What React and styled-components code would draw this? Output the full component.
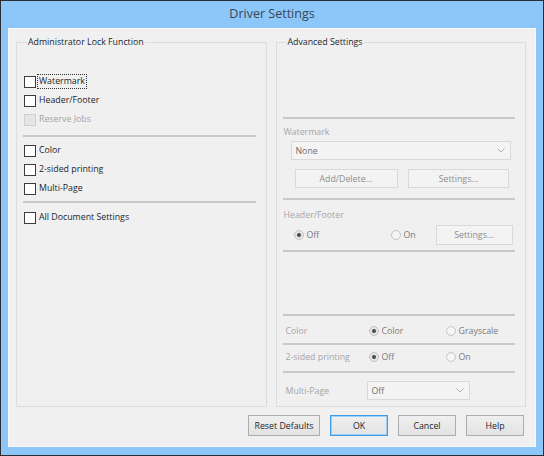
import React from "react";
import styled, { createGlobalStyle } from "styled-components";

const GlobalStyle = createGlobalStyle`
  html, body {
    margin: 0;
    padding: 0;
    background: #1e1e1e;
  }
  * {
    box-sizing: border-box;
  }
`;

const Window = styled.div`
  width: 544px;
  height: 456px;
  border: 1px solid #2c2c2c;
  background: #8dc6f8;
  padding: 0 7px 8px 7px;
  display: flex;
  flex-direction: column;
  font-family: "Open Sans", "Liberation Sans", sans-serif;
  font-size: 8.8px;
  color: #1a1f2e;
`;

const TitleBar = styled.div`
  height: 27px;
  display: flex;
  align-items: center;
  justify-content: center;
  font-size: 12.5px;
  color: #3a4655;
  padding-bottom: 2px;
`;

const Client = styled.div`
  flex: 1;
  background: #f0f0f0;
  border: 1px solid #f8f8f8;
  padding: 6px 9px 10px 7px;
  display: flex;
  flex-direction: column;
`;

const Columns = styled.div`
  flex: 1;
  display: flex;
  gap: 9px;
`;

const Group = styled.fieldset`
  margin: 0;
  flex: 1;
  min-width: 0;
  border: 1px solid #dcdcdc;
  padding: 0 10px 0 6px;
  display: flex;
  flex-direction: column;
`;

const Legend = styled.legend`
  padding: 0 1px;
  margin-left: 4px;
  line-height: 14px;
  color: #1a1f2e;
`;

const Separator = styled.div`
  height: 2px;
  background: #c9c9c9;
  margin-top: ${(p) => p.$top || 0}px;
`;

const CheckRow = styled.div`
  height: 19px;
  display: flex;
  align-items: center;
  margin-top: ${(p) => p.$top || 0}px;
  padding-left: 1px;
  color: ${(p) => (p.$disabled ? "#a4a4a4" : "#1a1f2e")};
`;

const Box = styled.span`
  width: 12px;
  height: 12px;
  border: 1px solid ${(p) => (p.$disabled ? "#cfcfcf" : "#3b3b3b")};
  background: ${(p) => (p.$disabled ? "#e6e6e6" : "#ffffff")};
  flex: none;
`;

const CheckText = styled.span`
  line-height: 13px;
  padding: 0 1px;
  margin-left: 1px;
  border: 1px ${(p) => (p.$focus ? "dotted #333" : "solid transparent")};
`;

const FieldLabel = styled.div`
  line-height: 14px;
  color: #a6a6a6;
  margin-top: ${(p) => p.$top || 0}px;
  padding-left: 1px;
`;

const SelectBox = styled.div`
  height: 19px;
  width: ${(p) => p.$width || "auto"};
  margin-top: ${(p) => p.$top || 0}px;
  margin-left: ${(p) => p.$left || 0}px;
  margin-right: ${(p) => p.$right || 0}px;
  border: 1px solid #d9d9d9;
  background: #f4f4f4;
  display: flex;
  align-items: center;
  justify-content: space-between;
  padding: 0 5px 0 4px;
  color: #6e6e6e;
`;

const Chevron = () => (
  <svg width="8" height="5" viewBox="0 0 8 5">
    <path d="M0.5 0.5 L4 4 L7.5 0.5" fill="none" stroke="#b0b0b0" strokeWidth="1" />
  </svg>
);

const ButtonRow = styled.div`
  display: flex;
  justify-content: ${(p) => p.$justify || "flex-start"};
  gap: ${(p) => p.$gap || 0}px;
  margin-top: ${(p) => p.$top || 0}px;
  padding-left: ${(p) => p.$left || 0}px;
  padding-right: ${(p) => p.$right || 0}px;
`;

const DisabledButton = styled.div`
  width: ${(p) => p.$width}px;
  height: ${(p) => p.$height || 19}px;
  border: 1px solid #d9d9d9;
  background: #f3f3f3;
  color: #8e8e8e;
  display: flex;
  align-items: center;
  justify-content: center;
`;

const Button = styled.div`
  width: ${(p) => p.$width || 58}px;
  height: 21px;
  border: 1px solid ${(p) => (p.$default ? "#3c9be4" : "#adadad")};
  box-shadow: ${(p) => (p.$default ? "inset 0 0 0 1px #9fd0f5" : "none")};
  background: linear-gradient(#efefef, #e3e3e3);
  color: #1c1f2c;
  display: flex;
  align-items: center;
  justify-content: center;
`;

const OptionRow = styled.div`
  height: ${(p) => p.$height || 16}px;
  display: grid;
  grid-template-columns: ${(p) => p.$cols};
  align-items: center;
  margin-top: ${(p) => p.$top || 0}px;
  padding-left: ${(p) => p.$left || 0}px;
  color: #a6a6a6;
`;

const Radio = styled.span`
  display: flex;
  align-items: center;
  gap: 3px;
  color: #7a7a7a;
`;

const Circle = styled.span`
  width: 10px;
  height: 10px;
  border-radius: 50%;
  border: 1px solid #c4c4c4;
  background: ${(p) => (p.$on ? "#e4e4e4" : "#f5f5f5")};
  display: flex;
  align-items: center;
  justify-content: center;
  flex: none;

  &::after {
    content: "";
    width: 4px;
    height: 4px;
    border-radius: 50%;
    background: ${(p) => (p.$on ? "#4a4a4a" : "transparent")};
  }
`;

const Opt = ({ on, children }) => (
  <Radio>
    <Circle $on={on} />
    {children}
  </Radio>
);

const Check = ({ label, top, disabled, focus }) => (
  <CheckRow $top={top} $disabled={disabled}>
    <Box $disabled={disabled} />
    <CheckText $focus={focus}>{label}</CheckText>
  </CheckRow>
);

const LockPanel = () => (
  <Group>
    <Legend>Administrator Lock Function</Legend>
    <Check label="Watermark" top={23} focus />
    <Check label="Header/Footer" />
    <Check label="Reserve Jobs" disabled />
    <Separator $top={6} />
    <Check label="Color" top={4} />
    <Check label="2-sided printing" />
    <Check label="Multi-Page" />
    <Separator $top={3} />
    <Check label="All Document Settings" top={5} />
  </Group>
);

const AdvancedPanel = () => (
  <Group>
    <Legend>Advanced Settings</Legend>
    <Separator $top={68} />
    <FieldLabel $top={6}>Watermark</FieldLabel>
    <SelectBox $top={2} $left={8} $right={4}>
      None
      <Chevron />
    </SelectBox>
    <ButtonRow $top={9} $left={12} $right={6} $justify="space-between">
      <DisabledButton $width={103}>Add/Delete...</DisabledButton>
      <DisabledButton $width={101}>Settings...</DisabledButton>
    </ButtonRow>
    <Separator $top={10} />
    <FieldLabel $top={8}>Header/Footer</FieldLabel>
    <OptionRow $top={2} $height={21} $left={11} $cols="97px 45px 77px">
      <Opt on>Off</Opt>
      <Opt>On</Opt>
      <DisabledButton $width={77} $height={20}>Settings...</DisabledButton>
    </OptionRow>
    <Separator $top={5} />
    <Separator $top={62} />
    <OptionRow $top={7} $left={3} $cols="83px 77px 1fr">
      <span>Color</span>
      <Opt on>Color</Opt>
      <Opt>Grayscale</Opt>
    </OptionRow>
    <Separator $top={4} />
    <OptionRow $top={4} $left={3} $cols="83px 77px 1fr">
      <span>2-sided printing</span>
      <Opt on>Off</Opt>
      <Opt>On</Opt>
    </OptionRow>
    <Separator $top={6} />
    <OptionRow $top={8} $height={19} $left={3} $cols="81px 103px 1fr">
      <span>Multi-Page</span>
      <SelectBox $width="103px">
        Off
        <Chevron />
      </SelectBox>
    </OptionRow>
  </Group>
);

export default function App() {
  return (
    <>
      <GlobalStyle />
      <Window>
        <TitleBar>Driver Settings</TitleBar>
        <Client>
          <Columns>
            <LockPanel />
            <AdvancedPanel />
          </Columns>
          <ButtonRow $top={8} $gap={10} $justify="flex-end" $right={2}>
            <Button $width={72}>Reset Defaults</Button>
            <Button $default>OK</Button>
            <Button>Cancel</Button>
            <Button>Help</Button>
          </ButtonRow>
        </Client>
      </Window>
    </>
  );
}
